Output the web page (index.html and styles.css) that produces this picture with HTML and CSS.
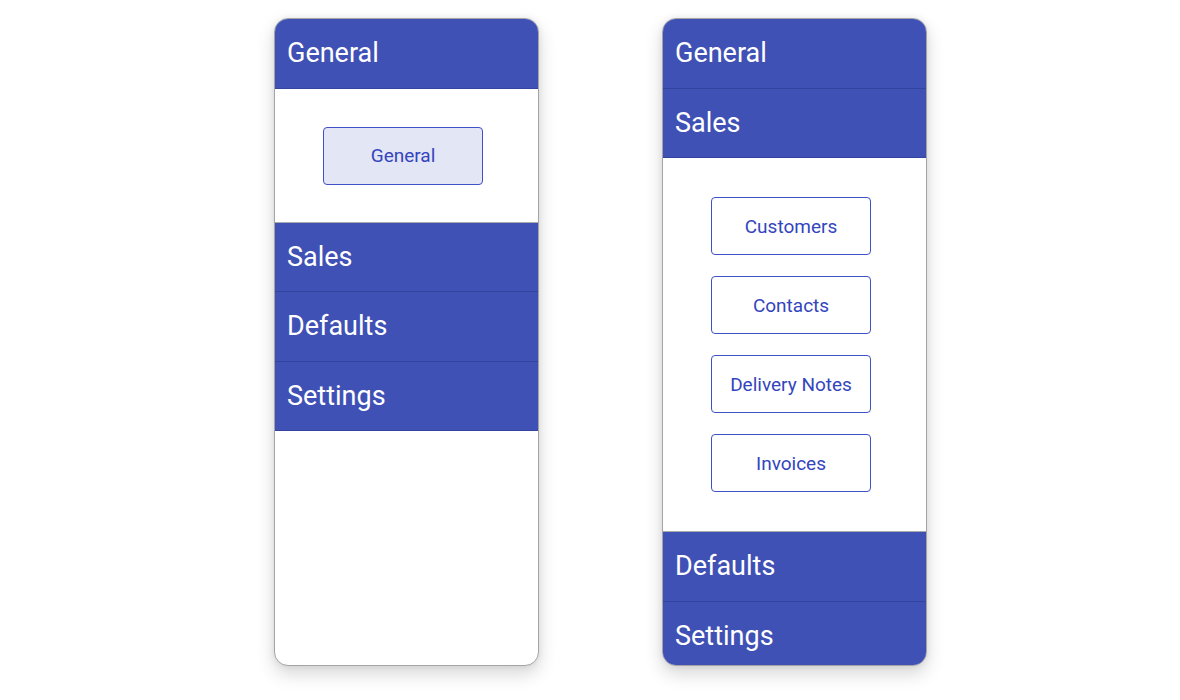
FILE: index.html
```html
<!DOCTYPE html>
<html>
<head>
<meta charset="utf-8">
<link rel="stylesheet" href="styles.css">
</head>
<body>
<div class="stage">
  <div class="panel">
    <div class="header">General</div>
    <div class="content">
      <div class="btn selected">General</div>
    </div>
    <div class="header">Sales</div>
    <div class="header">Defaults</div>
    <div class="header">Settings</div>
  </div>
  <div class="panel">
    <div class="header">General</div>
    <div class="header">Sales</div>
    <div class="content tall">
      <div class="btn">Customers</div>
      <div class="btn">Contacts</div>
      <div class="btn">Delivery Notes</div>
      <div class="btn">Invoices</div>
    </div>
    <div class="header">Defaults</div>
    <div class="header">Settings</div>
  </div>
</div>
</body>
</html>
```

FILE: styles.css
```css
html, body {
  margin: 0;
  padding: 0;
  background: #ffffff;
}
body {
  font-family: Roboto, "Liberation Sans", sans-serif;
  min-height: 700px;
}
.stage {
  display: flex;
  gap: 123px;
  padding: 18px 0 34px 274px;
}
.panel {
  width: 265px;
  height: 648px;
  box-sizing: border-box;
  border: 1px solid #a4a4a4;
  border-radius: 14px;
  overflow: hidden;
  background: #ffffff;
  box-shadow: 0 8px 18px rgba(0, 0, 0, 0.16), 0 0 6px rgba(0, 0, 0, 0.08);
  display: flex;
  flex-direction: column;
}
.header {
  flex: none;
  height: 69.5px;
  box-sizing: border-box;
  background: #3f51b5;
  border-bottom: 1px solid #33449e;
  color: #ffffff;
  font-size: 27px;
  line-height: 68px;
  padding-left: 12px;
}
.content {
  flex: none;
  display: flex;
  flex-direction: column;
  align-items: center;
  gap: 21px;
  padding: 38px 7px 37px 0;
  border-bottom: 1px solid #ababab;
}
.content.tall {
  padding: 39px 7px 39px 0;
}
.btn {
  width: 160px;
  height: 58px;
  box-sizing: border-box;
  border: 1.5px solid #3f51c6;
  border-radius: 4px;
  color: #3345bd;
  font-size: 19px;
  display: flex;
  align-items: center;
  justify-content: center;
  background: #ffffff;
}
.btn.selected {
  background: #e3e6f4;
}
```
